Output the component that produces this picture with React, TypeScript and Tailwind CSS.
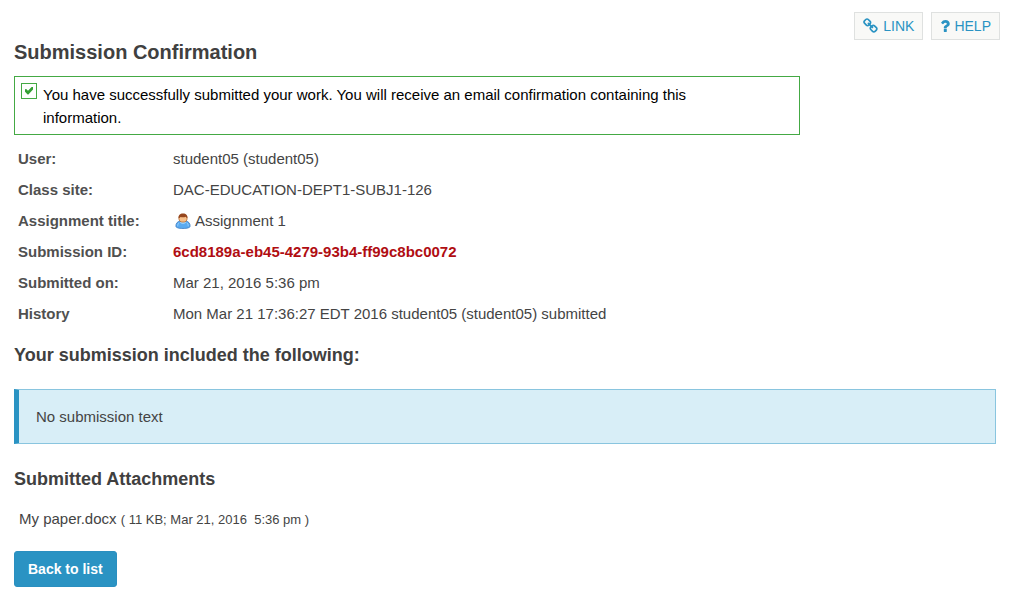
import type { ReactNode } from "react";

function LinkIcon() {
  return (
    <svg viewBox="0 0 1792 1792" className="size-4" fill="currentColor" aria-hidden="true">
      <path d="M1456 1216q0-40-28-68l-208-208q-28-28-68-28-42 0-72 32 3 3 19 18.5t21.5 21.5 15 19 13 25.5 3.5 27.5q0 40-28 68t-68 28q-15 0-27.5-3.5t-25.5-13-19-15-21.5-21.5-18.5-19q-33 31-33 73 0 40 28 68l206 207q27 27 68 27 40 0 68-26l147-146q28-28 28-67zm-703-705q0-40-28-68l-206-207q-28-28-68-28-39 0-68 27l-147 146q-28 28-28 67 0 40 28 68l208 208q27 27 68 27 42 0 72-31-3-3-19-18.5t-21.5-21.5-15-19-13-25.5-3.5-27.5q0-40 28-68t68-28q15 0 27.5 3.5t25.5 13 19 15 21.5 21.5 18.5 19q33-31 33-73zm895 705q0 120-85 203l-147 146q-83 83-203 83-121 0-204-85l-206-207q-83-83-83-203 0-123 88-209l-88-88q-86 88-208 88-120 0-204-84l-208-208q-84-84-84-204t85-203l147-146q83-83 203-83 121 0 204 85l206 207q83 83 83 203 0 123-88 209l88 88q86-88 208-88 120 0 204 84l208 208q84 84 84 204z" />
    </svg>
  );
}

function QuestionIcon() {
  return (
    <svg viewBox="360 256 1072 1280" className="h-3 w-2.5" fill="currentColor" aria-hidden="true">
      <path d="M1088 1256v240q0 16-12 28t-28 12h-240q-16 0-28-12t-12-28v-240q0-16 12-28t28-12h240q16 0 28 12t12 28zm316-600q0 54-15.5 101t-35 76.5-55 59.5-57.5 43.5-61 35.5q-41 23-68.5 65t-27.5 67q0 17-12 32.5t-28 15.5h-240q-15 0-25.5-18.5t-10.5-37.5v-45q0-83 65-156.5t143-108.5q59-27 84-56t25-76q0-42-46.5-74t-107.5-32q-65 0-108 29-35 25-107 115-13 16-31 16-12 0-25-8l-164-125q-13-10-15.5-25t5.5-28q160-266 464-266 80 0 161 31t146 83 106 127.5 41 158.5z" />
    </svg>
  );
}

function CheckIcon() {
  return (
    <svg viewBox="0 0 16 16" className="size-4 shrink-0" aria-hidden="true">
      <rect x="0.5" y="0.5" width="15" height="15" fill="#fff" stroke="#44a944" />
      <path d="M4 6.2 5.2 6 7 7.8 10.6 4 12 4 12 6.6 7.4 11.4 6.6 11.4 4 8.8z" fill="#35a035" />
    </svg>
  );
}

function UserIcon() {
  return (
    <svg viewBox="0 0 16 16" className="size-4" aria-hidden="true">
      <path d="M.9 13.4C.7 10.6 2.4 8.4 5.2 8h5.6c2.8.4 4.5 2.6 4.3 5.4-.3 1.3-3.1 2.1-7.1 2.1s-6.8-.8-7.1-2.1z" fill="#5aaaf0" stroke="#3d7cc2" strokeWidth="0.8" />
      <path d="M5 9.2c1.6 2 4.4 2 6 0l-.7-1.4H5.7z" fill="#a9d8fb" />
      <path d="M2.7 13.2c0-1.6.5-2.8 1.5-3.5M13.3 13.2c0-1.6-.5-2.8-1.5-3.5" fill="none" stroke="#a9d8fb" strokeWidth="0.7" />
      <ellipse cx="8" cy="5.4" rx="4.1" ry="3.7" fill="#f7c08a" stroke="#a8622c" strokeWidth="0.7" />
      <path d="M3.6 5.2C3.2 2 5 .4 8 .4s4.8 1.6 4.4 4.8c-.9-.3-1.4-.8-1.7-1.4-1.8.8-3.8.6-5.2.1-.3.7-.9 1.1-1.9 1.3z" fill="#96461d" />
    </svg>
  );
}

function ToolLink({ icon, children }: { icon: ReactNode; children: ReactNode }) {
  return (
    <a href="#" className="flex h-7 items-center gap-1 border border-[#dfe1e0] bg-[#f9f9f7] px-2 text-sm text-[#2a93c3]">
      {icon}
      {children}
    </a>
  );
}

const details: { label: string; value: ReactNode }[] = [
  { label: "User:", value: "student05 (student05)" },
  { label: "Class site:", value: "DAC-EDUCATION-DEPT1-SUBJ1-126" },
  {
    label: "Assignment title:",
    value: (
      <span className="flex items-center gap-1 pl-0.5">
        <UserIcon />
        Assignment 1
      </span>
    ),
  },
  {
    label: "Submission ID:",
    value: <strong className="text-[#b00d12]">6cd8189a-eb45-4279-93b4-ff99c8bc0072</strong>,
  },
  { label: "Submitted on:", value: "Mar 21, 2016 5:36 pm" },
  { label: "History", value: "Mon Mar 21 17:36:27 EDT 2016 student05 (student05) submitted" },
];

export default function App() {
  return (
    <div className="min-h-screen bg-white pb-6 font-['Liberation_Sans',Arial,sans-serif] text-[15px] leading-[23px] text-[#444]">
      <nav className="flex justify-end gap-2 pt-3 pr-5">
        <ToolLink icon={<LinkIcon />}>LINK</ToolLink>
        <ToolLink icon={<QuestionIcon />}>HELP</ToolLink>
      </nav>
      <main className="pr-6 pl-3.5">
        <h1 className="text-xl leading-6 font-bold text-[#404040]">Submission Confirmation</h1>
        <div className="mt-3 flex w-4/5 gap-1.5 border border-[#44a944] px-1.5 pt-1.5 pb-[5px] text-black">
          <CheckIcon />
          <p className="pr-16">
            You have successfully submitted your work. You will receive an email confirmation containing this
            information.
          </p>
        </div>
        <table className="mt-2 text-left">
          <tbody>
            {details.map(({ label, value }) => (
              <tr key={label}>
                <th scope="row" className="w-[159px] py-1 pl-1 font-bold text-[#505050]">
                  {label}
                </th>
                <td className="py-1">{value}</td>
              </tr>
            ))}
          </tbody>
        </table>
        <h2 className="mt-3.5 text-lg leading-6 font-bold text-[#404040]">Your submission included the following:</h2>
        <div className="mt-[22px] border border-l-[5px] border-[#89c5df] border-l-[#2a93c3] bg-[#d8eef7] px-[17px] py-[15px]">
          No submission text
        </div>
        <h2 className="mt-[23px] text-lg leading-6 font-bold text-[#404040]">Submitted Attachments</h2>
        <p className="mt-4 pl-[5px]">
          <a href="#">My paper.docx</a>{" "}
          <span className="text-[13px] whitespace-pre">( 11 KB; Mar 21, 2016  5:36 pm )</span>
        </p>
        <button
          type="button"
          className="mt-5 h-9 rounded-[3px] border border-[#2a8fc0] bg-[#2a93c3] px-[13px] text-sm font-bold text-white"
        >
          Back to list
        </button>
      </main>
    </div>
  );
}
